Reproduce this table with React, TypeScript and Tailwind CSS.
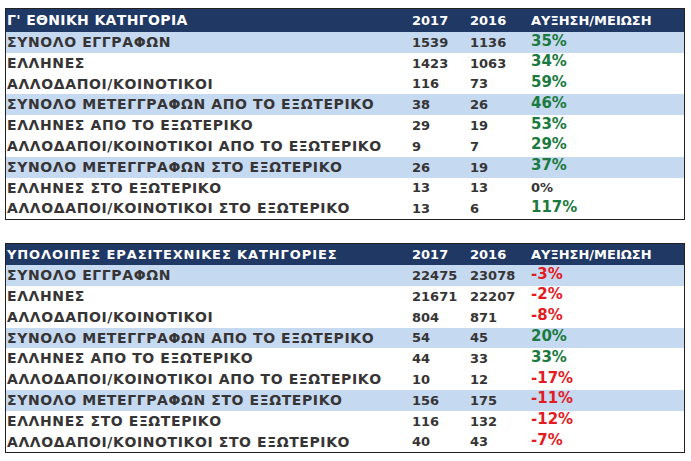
import React from "react";

type Row = { label: string; a: string; b: string; p: string; kind: "g" | "r" | "n"; hl?: boolean };

const t1: Row[] = [
  { label: "ΣΥΝΟΛΟ ΕΓΓΡΑΦΩΝ", a: "1539", b: "1136", p: "35%", kind: "g", hl: true },
  { label: "ΕΛΛΗΝΕΣ", a: "1423", b: "1063", p: "34%", kind: "g" },
  { label: "ΑΛΛΟΔΑΠΟΙ/ΚΟΙΝΟΤΙΚΟΙ", a: "116", b: "73", p: "59%", kind: "g" },
  { label: "ΣΥΝΟΛΟ ΜΕΤΕΓΓΡΑΦΩΝ ΑΠΟ ΤΟ ΕΞΩΤΕΡΙΚΟ", a: "38", b: "26", p: "46%", kind: "g", hl: true },
  { label: "ΕΛΛΗΝΕΣ ΑΠΟ ΤΟ ΕΞΩΤΕΡΙΚΟ", a: "29", b: "19", p: "53%", kind: "g" },
  { label: "ΑΛΛΟΔΑΠΟΙ/ΚΟΙΝΟΤΙΚΟΙ ΑΠΟ ΤΟ ΕΞΩΤΕΡΙΚΟ", a: "9", b: "7", p: "29%", kind: "g" },
  { label: "ΣΥΝΟΛΟ ΜΕΤΕΓΓΡΑΦΩΝ ΣΤΟ ΕΞΩΤΕΡΙΚΟ", a: "26", b: "19", p: "37%", kind: "g", hl: true },
  { label: "ΕΛΛΗΝΕΣ ΣΤΟ ΕΞΩΤΕΡΙΚΟ", a: "13", b: "13", p: "0%", kind: "n" },
  { label: "ΑΛΛΟΔΑΠΟΙ/ΚΟΙΝΟΤΙΚΟΙ ΣΤΟ ΕΞΩΤΕΡΙΚΟ", a: "13", b: "6", p: "117%", kind: "g" },
];

const t2: Row[] = [
  { label: "ΣΥΝΟΛΟ ΕΓΓΡΑΦΩΝ", a: "22475", b: "23078", p: "-3%", kind: "r", hl: true },
  { label: "ΕΛΛΗΝΕΣ", a: "21671", b: "22207", p: "-2%", kind: "r" },
  { label: "ΑΛΛΟΔΑΠΟΙ/ΚΟΙΝΟΤΙΚΟΙ", a: "804", b: "871", p: "-8%", kind: "r" },
  { label: "ΣΥΝΟΛΟ ΜΕΤΕΓΓΡΑΦΩΝ ΑΠΟ ΤΟ ΕΞΩΤΕΡΙΚΟ", a: "54", b: "45", p: "20%", kind: "g", hl: true },
  { label: "ΕΛΛΗΝΕΣ ΑΠΟ ΤΟ ΕΞΩΤΕΡΙΚΟ", a: "44", b: "33", p: "33%", kind: "g" },
  { label: "ΑΛΛΟΔΑΠΟΙ/ΚΟΙΝΟΤΙΚΟΙ ΑΠΟ ΤΟ ΕΞΩΤΕΡΙΚΟ", a: "10", b: "12", p: "-17%", kind: "r" },
  { label: "ΣΥΝΟΛΟ ΜΕΤΕΓΓΡΑΦΩΝ ΣΤΟ ΕΞΩΤΕΡΙΚΟ", a: "156", b: "175", p: "-11%", kind: "r", hl: true },
  { label: "ΕΛΛΗΝΕΣ ΣΤΟ ΕΞΩΤΕΡΙΚΟ", a: "116", b: "132", p: "-12%", kind: "r" },
  { label: "ΑΛΛΟΔΑΠΟΙ/ΚΟΙΝΟΤΙΚΟΙ ΣΤΟ ΕΞΩΤΕΡΙΚΟ", a: "40", b: "43", p: "-7%", kind: "r" },
];

function Table({ title, titleCls, rows, headH }: { title: string; titleCls: string; rows: Row[]; headH: string }) {
  return (
    <div className="border border-[#222] w-[680px]">
      <div className={`grid grid-cols-[404px_58px_61px_1fr] items-center bg-[#1f3864] text-white text-[13px] font-bold ${headH}`}>
        <div className={`pl-[1px] whitespace-nowrap ${titleCls}`}>{title}</div>
        <div className="pl-[2px]">2017</div>
        <div className="pl-[2px]">2016</div>
        <div className="pl-[2px]">ΑΥΞΗΣΗ/ΜΕΙΩΣΗ</div>
      </div>
      {rows.map((r, i) => (
        <div
          key={i}
          className={`grid grid-cols-[404px_58px_61px_1fr] items-center h-[20.8px] text-[13px] font-bold text-[#363434] ${r.hl ? "bg-[#c5d9f1]" : "bg-white"}`}
        >
          <div className="pl-[1px] whitespace-nowrap text-[14px] tracking-[0.6px]">{r.label}</div>
          <div className="pl-[2px]">{r.a}</div>
          <div className="pl-[2px]">{r.b}</div>
          {r.kind === "n" ? (
            <div className="pl-[2px] text-[13px]">{r.p}</div>
          ) : (
            <div className={`pl-[2px] text-[15px] leading-none -mt-[3px] ${r.kind === "g" ? "text-[#1b7a3e]" : "text-[#e31b23]"}`}>{r.p}</div>
          )}
        </div>
      ))}
    </div>
  );
}

export default function App() {
  return (
    <div className="w-[691px] h-[461px] bg-white pl-[5px] pt-[8px] flex flex-col gap-[23px]" style={{ fontFamily: '"DejaVu Sans", Verdana, sans-serif' }}>
      <Table title="Γ' ΕΘΝΙΚΗ ΚΑΤΗΓΟΡΙΑ" titleCls="text-[14px] tracking-[0.35px]" rows={t1} headH="h-[23px]" />
      <Table title="ΥΠΟΛΟΙΠΕΣ ΕΡΑΣΙΤΕΧΝΙΚΕΣ ΚΑΤΗΓΟΡΙΕΣ" titleCls="text-[13px] tracking-[0.9px]" rows={t2} headH="h-[21px]" />
    </div>
  );
}
